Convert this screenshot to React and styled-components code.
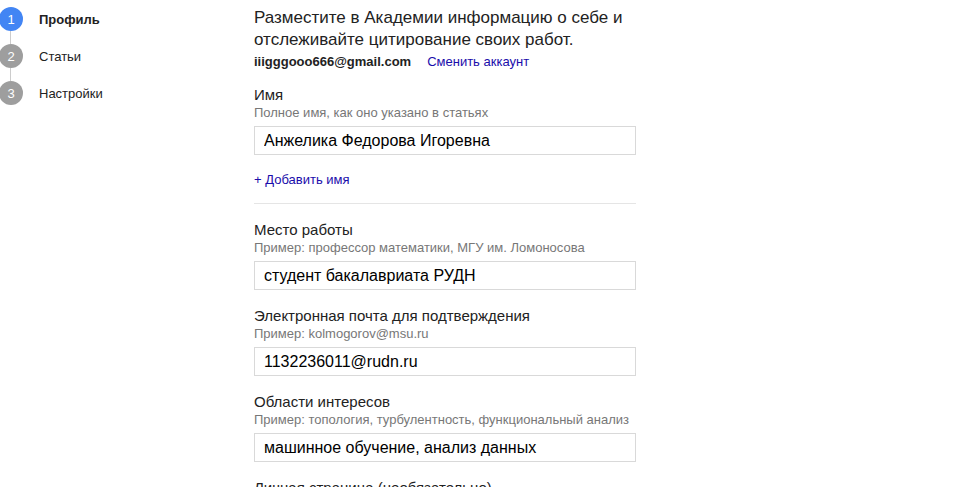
import React from "react";
import styled, { createGlobalStyle } from "styled-components";

const GlobalStyle = createGlobalStyle`
  html, body {
    margin: 0;
    padding: 0;
    background: #fff;
    font-family: "Liberation Sans", Arial, sans-serif;
    color: #222;
  }
`;

const Page = styled.div`
  display: flex;
  height: 487px;
  overflow: hidden;
`;

const Sidebar = styled.nav`
  width: 254px;
  flex-shrink: 0;
  padding-top: 7px;
  box-sizing: border-box;
`;

const StepList = styled.div`
  display: flex;
  flex-direction: column;
`;

const Step = styled.div`
  display: flex;
  align-items: center;
  height: 24px;
`;

const StepCircle = styled.div`
  width: 24px;
  height: 24px;
  margin-left: -1px;
  border-radius: 50%;
  background: ${({ active }) => (active ? "#4285f4" : "#9e9e9e")};
  color: #fff;
  font-size: 13px;
  display: flex;
  align-items: center;
  justify-content: center;
  flex-shrink: 0;
`;

const StepLabel = styled.span`
  margin-left: 16px;
  font-size: 13px;
  font-weight: ${({ active }) => (active ? "bold" : "normal")};
  color: #222;
`;

const Connector = styled.div`
  width: 1px;
  height: 13px;
  margin-left: 10px;
  background: #ccc;
`;

const Main = styled.main`
  width: 382px;
  padding-top: 7px;
`;

const Heading = styled.h1`
  margin: 0;
  font-size: 17px;
  font-weight: normal;
  line-height: 22px;
  color: #222;
`;

const AccountRow = styled.div`
  display: flex;
  align-items: center;
  height: 18px;
  margin-top: 1px;
  font-size: 13px;
`;

const Email = styled.span`
  font-weight: bold;
  color: #222;
`;

const Link = styled.a`
  color: #1a0dab;
  text-decoration: none;
  font-size: 13px;
  cursor: pointer;
  margin-left: ${({ offset }) => offset || 0}px;
`;

const Field = styled.div`
  margin-top: ${({ top }) => top || 0}px;
  margin-bottom: 16px;
`;

const Label = styled.div`
  font-size: 15px;
  line-height: 20px;
  color: #222;
`;

const Hint = styled.div`
  font-size: 13px;
  line-height: 16px;
  color: #777;
`;

const Input = styled.input`
  display: block;
  width: 100%;
  height: 29px;
  box-sizing: border-box;
  margin-top: 5px;
  padding: 0 9px;
  border: 1px solid #d9d9d9;
  border-radius: 0;
  font-family: "Liberation Sans", Arial, sans-serif;
  font-size: 16px;
  color: #000;
  outline: none;
`;

const AddRow = styled.div`
  line-height: 16px;
  margin-top: 1px;
`;

const Divider = styled.hr`
  border: none;
  border-top: 1px solid #e5e5e5;
  margin: 15px 0 16px;
`;

const steps = [
  { n: 1, label: "Профиль", active: true },
  { n: 2, label: "Статьи" },
  { n: 3, label: "Настройки" },
];

const fields = [
  {
    label: "Место работы",
    hint: "Пример: профессор математики, МГУ им. Ломоносова",
    value: "студент бакалавриата РУДН",
  },
  {
    label: "Электронная почта для подтверждения",
    hint: "Пример: kolmogorov@msu.ru",
    value: "1132236011@rudn.ru",
  },
  {
    label: "Области интересов",
    hint: "Пример: топология, турбулентность, функциональный анализ",
    value: "машинное обучение, анализ данных",
  },
];

const App = () => {
  return (
    <>
      <GlobalStyle />
      <Page>
        <Sidebar>
          <StepList>
            {steps.map((step, i) => (
              <React.Fragment key={step.n}>
                {i > 0 && <Connector />}
                <Step>
                  <StepCircle active={step.active}>{step.n}</StepCircle>
                  <StepLabel active={step.active}>{step.label}</StepLabel>
                </Step>
              </React.Fragment>
            ))}
          </StepList>
        </Sidebar>
        <Main>
          <Heading>
            Разместите в Академии информацию о себе и отслеживайте цитирование своих работ.
          </Heading>
          <AccountRow>
            <Email>iiigggooo666@gmail.com</Email>
            <Link offset={16}>Сменить аккаунт</Link>
          </AccountRow>
          <Field top={15}>
            <Label>Имя</Label>
            <Hint>Полное имя, как оно указано в статьях</Hint>
            <Input defaultValue="Анжелика Федорова Игоревна" />
          </Field>
          <AddRow>
            <Link>+ Добавить имя</Link>
          </AddRow>
          <Divider />
          {fields.map((f) => (
            <Field key={f.label}>
              <Label>{f.label}</Label>
              <Hint>{f.hint}</Hint>
              <Input defaultValue={f.value} />
            </Field>
          ))}
          <Field>
            <Label>Личная страница (необязательно)</Label>
          </Field>
        </Main>
      </Page>
    </>
  );
};

export default App;
